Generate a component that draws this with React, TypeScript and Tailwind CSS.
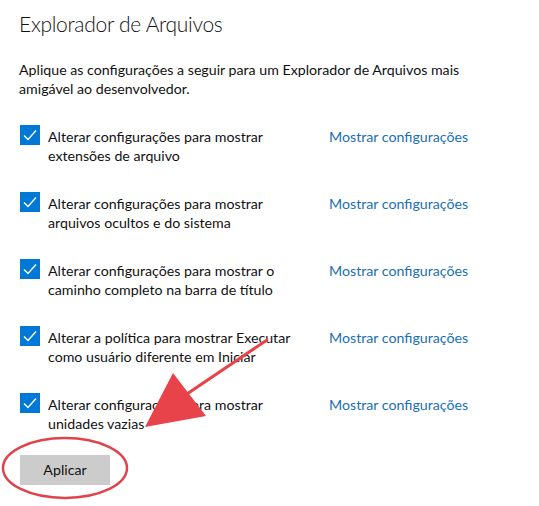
import React from 'react'

// Five developer-friendly Explorer options, each with its own "show settings" link.
const OPTIONS: { id: string; lines: [string, string] }[] = [
  { id: 'ext', lines: ['Alterar configurações para mostrar', 'extensões de arquivo'] },
  { id: 'hidden', lines: ['Alterar configurações para mostrar', 'arquivos ocultos e do sistema'] },
  { id: 'path', lines: ['Alterar configurações para mostrar o', 'caminho completo na barra de título'] },
  { id: 'runas', lines: ['Alterar a política para mostrar Executar', 'como usuário diferente em Iniciar'] },
  { id: 'drives', lines: ['Alterar configurações para mostrar', 'unidades vazias'] },
]

function CheckBox() {
  return (
    <span className="flex h-[20px] w-[20px] shrink-0 items-center justify-center bg-[#0078d7]">
      <svg width="20" height="20" viewBox="0 0 20 20" fill="none">
        <polyline points="4,10.5 8,14.5 16,5.5" stroke="white" strokeWidth="1.4" />
      </svg>
    </span>
  )
}

export default function App() {
  return (
    <div
      className="relative h-[506px] w-[539px] overflow-hidden bg-white pl-[19px] pt-[10px] text-[#111]"
      style={{ fontFamily: 'Lato, "Noto Sans", sans-serif' }}
    >
      <h1 className="text-[21px] leading-[28px] font-light tracking-[-0.3px]">Explorador de Arquivos</h1>

      <p className="mt-[22px] text-[14.2px] leading-[19px]">
        Aplique as configurações a seguir para um Explorador de Arquivos mais
        <br />
        amigável ao desenvolvedor.
      </p>

      <ul className="mt-[27px] flex flex-col gap-[27px]">
        {OPTIONS.map((opt) => (
          <li key={opt.id} className="flex items-start text-[14.2px] leading-[19px]">
            <span className="ml-[1px]">
              <CheckBox />
            </span>
            <span className="ml-[8px] w-[281px] whitespace-nowrap pt-[2px]">
              {opt.lines[0]}
              <br />
              {opt.lines[1]}
            </span>
            <a className="pt-[2px] text-[#1a6fb5]">Mostrar configurações</a>
          </li>
        ))}
      </ul>

      <button className="ml-[1px] mt-[22px] h-[30px] w-[90px] bg-[#cccccc] text-[14.2px] text-[#111]">
        Aplicar
      </button>

      {/* red annotation drawn over the screenshot */}
      <svg
        className="pointer-events-none absolute inset-0"
        width="539"
        height="506"
        viewBox="0 0 539 506"
        fill="none"
      >
        <ellipse cx="65" cy="468" rx="62" ry="30" stroke="#e0444b" strokeWidth="2.5" />
        <line x1="267" y1="340" x2="178" y2="400" stroke="#e8434a" strokeWidth="3" strokeLinecap="round" />
        <polygon points="145,427 173,373 206,416" fill="#e8434a" />
      </svg>
    </div>
  )
}
